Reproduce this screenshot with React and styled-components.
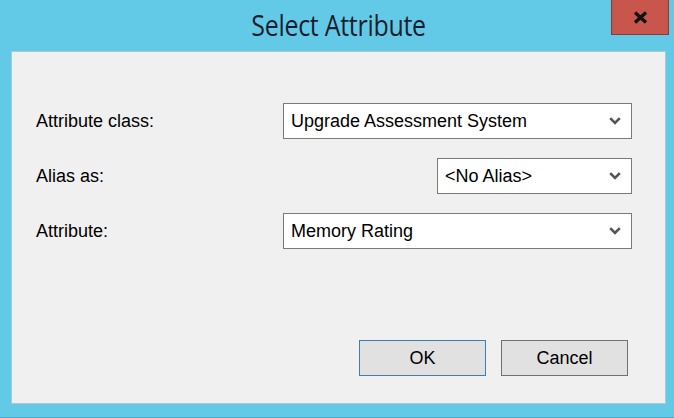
import React from "react";
import styled, { createGlobalStyle } from "styled-components";

const GlobalStyle = createGlobalStyle`
  html, body {
    margin: 0;
    padding: 0;
    background: #62cae7;
  }
  * {
    box-sizing: border-box;
  }
`;

const Window = styled.div`
  width: 674px;
  height: 418px;
  background: #62cae7;
  display: flex;
  flex-direction: column;
  padding: 0 8px 13px 11px;
  border-bottom: 1px solid #4aa9c4;
  font-family: "Liberation Sans", Arial, sans-serif;
`;

const TitleBar = styled.div`
  position: relative;
  height: 51px;
  display: flex;
  align-items: center;
  justify-content: center;
  flex-shrink: 0;
`;

const Title = styled.h1`
  margin: 0 0 3px 0;
  font-family: "Open Sans", "Noto Sans", sans-serif;
  font-weight: 400;
  font-size: 29px;
  color: #1a1d2e;
  transform: scaleX(0.86);
  letter-spacing: -0.3px;
`;

const CloseButton = styled.button`
  position: absolute;
  top: 0;
  right: -3px;
  width: 58px;
  height: 35px;
  background: #c9564d;
  border: 1px solid #8a3a35;
  border-top: none;
  display: flex;
  align-items: center;
  justify-content: center;
  padding: 0;
  cursor: pointer;
`;

const Client = styled.div`
  flex: 1;
  background: #f0f0f0;
  border: 1px solid #a9c7d4;
  display: flex;
  flex-direction: column;
  padding: 51px 33px 27px 24px;
`;

const Form = styled.div`
  display: grid;
  grid-template-columns: 247px 1fr;
  row-gap: 19px;
  align-items: center;
`;

const Label = styled.label`
  font-size: 18px;
  color: #000;
`;

const Select = styled.div`
  justify-self: ${(p) => (p.$narrow ? "end" : "stretch")};
  width: ${(p) => (p.$narrow ? "195px" : "auto")};
  height: 36px;
  background: #fff;
  border: 1px solid #7a7a7a;
  display: flex;
  align-items: center;
  justify-content: space-between;
  padding: 0 10px 0 7px;
  font-size: 18px;
  color: #000;
`;

const Chevron = () => (
  <svg width="12" height="8" viewBox="0 0 12 8">
    <path
      d="M1.2 1.2 L6 6 L10.8 1.2"
      fill="none"
      stroke="#555"
      strokeWidth="2.6"
    />
  </svg>
);

const Buttons = styled.div`
  margin-top: auto;
  display: flex;
  justify-content: flex-end;
  gap: 15px;
  padding-right: 4px;
`;

const Button = styled.button`
  width: 127px;
  height: 36px;
  background: #e1e1e1;
  border: 1px solid ${(p) => (p.$primary ? "#3c7fb1" : "#707070")};
  font-family: "Liberation Sans", Arial, sans-serif;
  font-size: 18px;
  color: #000;
  padding: 0;
`;

const fields = [
  { label: "Attribute class:", value: "Upgrade Assessment System" },
  { label: "Alias as:", value: "<No Alias>", narrow: true },
  { label: "Attribute:", value: "Memory Rating" },
];

export default function App() {
  return (
    <>
      <GlobalStyle />
      <Window>
        <TitleBar>
          <Title>Select Attribute</Title>
          <CloseButton aria-label="Close">
            <svg width="15" height="13" viewBox="0 0 15 13">
              <path
                d="M2 1.5 L13 11.5 M13 1.5 L2 11.5"
                stroke="#111"
                strokeWidth="3.4"
                fill="none"
              />
            </svg>
          </CloseButton>
        </TitleBar>
        <Client>
          <Form>
            {fields.map((f) => (
              <React.Fragment key={f.label}>
                <Label>{f.label}</Label>
                <Select $narrow={f.narrow}>
                  <span>{f.value}</span>
                  <Chevron />
                </Select>
              </React.Fragment>
            ))}
          </Form>
          <Buttons>
            <Button $primary>OK</Button>
            <Button>Cancel</Button>
          </Buttons>
        </Client>
      </Window>
    </>
  );
}
